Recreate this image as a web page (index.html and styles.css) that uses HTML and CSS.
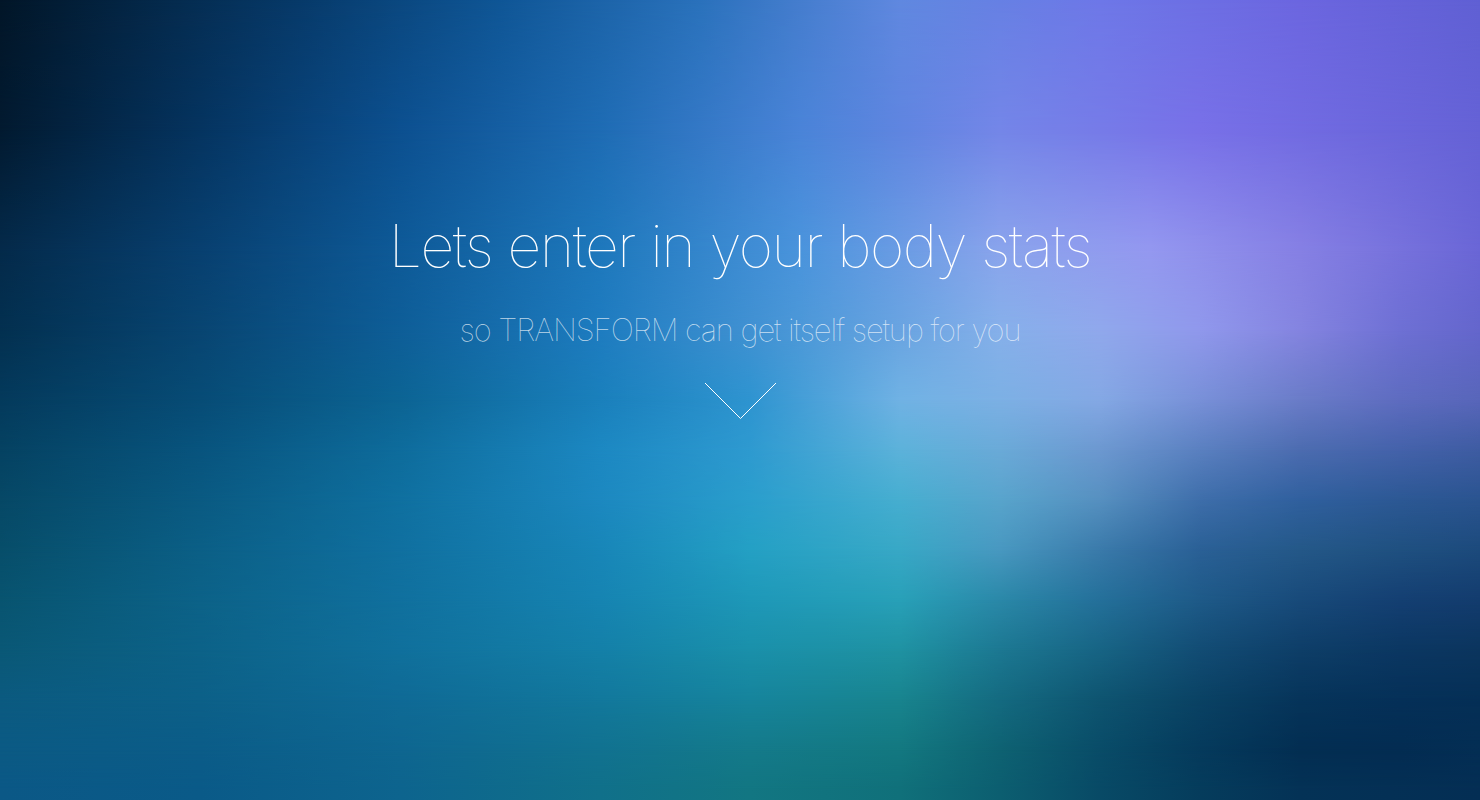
FILE: index.html
```html
<!DOCTYPE html>
<html lang="en">
<head>
<meta charset="utf-8">
<title>Body stats</title>
<link rel="stylesheet" href="styles.css">
</head>
<body>
<div class="page">
  <div class="bg bg-y0"></div>
  <div class="bg bg-y130"></div>
  <div class="bg bg-y250"></div>
  <div class="bg bg-y330"></div>
  <div class="bg bg-y400"></div>
  <div class="bg bg-y450"></div>
  <div class="bg bg-y500"></div>
  <div class="bg bg-y550"></div>
  <div class="bg bg-y600"></div>
  <div class="bg bg-y650"></div>
  <div class="bg bg-y700"></div>
  <div class="bg bg-y750"></div>
  <div class="bg bg-y790"></div>
  <main class="hero">
    <h1 class="hero-title">Lets enter in your body stats</h1>
    <p class="hero-sub">so TRANSFORM can get itself setup for you</p>
    <svg class="hero-chevron" width="73" height="38" viewBox="0 0 73 38" aria-hidden="true">
      <polyline points="1,1 36.5,36.5 72,1" fill="none" stroke="#ffffff" stroke-width="1"/>
    </svg>
  </main>
</div>
</body>
</html>
```
FILE: styles.css
```css
html, body {
  margin: 0;
  padding: 0;
  height: 100%;
}

body {
  font-family: "Inter", "Roboto", "Liberation Sans", sans-serif;
  color: #ffffff;
  overflow: hidden;
  background: #0a4a78;
}

.page {
  display: grid;
  grid-template: 800px / 1480px;
  width: 1480px;
  height: 800px;
}

.page > * {
  grid-area: 1 / 1;
}

/* blurred backdrop: horizontal colour rows, each faded in vertically over the previous one */
.bg-y0 {
  background: linear-gradient(90deg, #021628 0px, #073a6a 300px, #0f5696 500px, #2a72bc 700px, #6088e0 900px, #6e78e8 1100px, #6c66e0 1300px, #6060d4 1480px);
}
.bg-y130 {
  background: linear-gradient(90deg, #021a30 0px, #053460 200px, #0c5090 400px, #1e6cb4 600px, #4a84d8 800px, #7486e8 1000px, #7870e8 1200px, #6562d6 1480px);
  -webkit-mask-image: linear-gradient(180deg, transparent 0px, #000 130px);
  mask-image: linear-gradient(180deg, transparent 0px, #000 130px);
}
.bg-y250 {
  background: linear-gradient(90deg, #042a4a 0px, #084070 200px, #0e5a98 400px, #1e78bc 600px, #4a94dc 800px, #8aa4ec 1000px, #9498f0 1150px, #8680e4 1300px, #6a66d6 1480px);
  -webkit-mask-image: linear-gradient(180deg, transparent 130px, #000 250px);
  mask-image: linear-gradient(180deg, transparent 130px, #000 250px);
}
.bg-y330 {
  background: linear-gradient(90deg, #033050 0px, #084572 200px, #0e5e98 400px, #1e7cc0 600px, #4c98d8 800px, #86b0ea 1000px, #90a8ec 1100px, #9098ec 1200px, #8484e0 1300px, #6e70d4 1400px, #6466cc 1480px);
  -webkit-mask-image: linear-gradient(180deg, transparent 250px, #000 330px);
  mask-image: linear-gradient(180deg, transparent 250px, #000 330px);
}
.bg-y400 {
  background: linear-gradient(90deg, #043a5c 0px, #074c76 200px, #0c6494 400px, #1a80bc 600px, #2e94d0 750px, #70b2e4 900px, #7cb0e4 1000px, #84a8e4 1100px, #7890d8 1200px, #6a7cc8 1300px, #5e6cc0 1400px, #5866ba 1480px);
  -webkit-mask-image: linear-gradient(180deg, transparent 330px, #000 400px);
  mask-image: linear-gradient(180deg, transparent 330px, #000 400px);
}
.bg-y450 {
  background: linear-gradient(90deg, #054262 0px, #08547e 200px, #0e6c9c 400px, #1c88c2 600px, #2e9ad0 750px, #5cb2da 900px, #6aaad8 1000px, #6c98d0 1100px, #5a80c0 1200px, #4c6cb0 1300px, #4462aa 1400px, #3e5ca2 1480px);
  -webkit-mask-image: linear-gradient(180deg, transparent 400px, #000 450px);
  mask-image: linear-gradient(180deg, transparent 400px, #000 450px);
}
.bg-y500 {
  background: linear-gradient(90deg, #064866 0px, #0a5a82 200px, #0f70a0 400px, #1c88c0 600px, #2a9ecc 750px, #46aed0 900px, #58a4cc 1000px, #5690c0 1100px, #3e6eaa 1200px, #30609e 1300px, #2c5894 1400px, #2a5490 1480px);
  -webkit-mask-image: linear-gradient(180deg, transparent 450px, #000 500px);
  mask-image: linear-gradient(180deg, transparent 450px, #000 500px);
}
.bg-y550 {
  background: linear-gradient(90deg, #074e6a 0px, #0b5f86 200px, #1070a0 400px, #1886b8 600px, #24a0c4 750px, #38a8c6 900px, #4898c0 1000px, #3a7aaa 1100px, #2a6096 1200px, #245888 1300px, #1f5080 1400px, #1c4a7c 1480px);
  -webkit-mask-image: linear-gradient(180deg, transparent 500px, #000 550px);
  mask-image: linear-gradient(180deg, transparent 500px, #000 550px);
}
.bg-y600 {
  background: linear-gradient(90deg, #085470 0px, #0c6288 200px, #10709e 400px, #1684b2 600px, #1e98b8 750px, #28a0b8 900px, #2a88a8 1000px, #24709a 1100px, #1e5a88 1200px, #184a7a 1300px, #143f72 1400px, #133c6e 1480px);
  -webkit-mask-image: linear-gradient(180deg, transparent 550px, #000 600px);
  mask-image: linear-gradient(180deg, transparent 550px, #000 600px);
}
.bg-y650 {
  background: linear-gradient(90deg, #0a5876 0px, #0c6288 200px, #10709c 400px, #1480a8 600px, #1a90aa 750px, #1f92a2 900px, #1c7892 1000px, #176484 1100px, #124c74 1200px, #0e3e68 1300px, #0b3762 1400px, #0b355e 1480px);
  -webkit-mask-image: linear-gradient(180deg, transparent 600px, #000 650px);
  mask-image: linear-gradient(180deg, transparent 600px, #000 650px);
}
.bg-y700 {
  background: linear-gradient(90deg, #0b5a80 0px, #0c6088 200px, #0f6a96 400px, #12789c 600px, #16849c 750px, #18848e 900px, #146a80 1000px, #0e5470 1100px, #0a4264 1200px, #06345a 1300px, #053058 1400px, #052f56 1480px);
  -webkit-mask-image: linear-gradient(180deg, transparent 650px, #000 700px);
  mask-image: linear-gradient(180deg, transparent 650px, #000 700px);
}
.bg-y750 {
  background: linear-gradient(90deg, #0b5a84 0px, #0b5c88 200px, #0e6690 400px, #117290 600px, #147a8a 750px, #137880 900px, #0e6272 1000px, #094c68 1100px, #053a5c 1200px, #032e52 1300px, #032c52 1400px, #042e54 1480px);
  -webkit-mask-image: linear-gradient(180deg, transparent 700px, #000 750px);
  mask-image: linear-gradient(180deg, transparent 700px, #000 750px);
}
.bg-y790 {
  background: linear-gradient(90deg, #0b5886 0px, #0a5a88 200px, #0d648e 400px, #10708a 600px, #127682 750px, #10707a 900px, #0c5e70 1000px, #084a66 1100px, #053c5c 1200px, #043256 1300px, #042e54 1480px);
  -webkit-mask-image: linear-gradient(180deg, transparent 750px, #000 790px);
  mask-image: linear-gradient(180deg, transparent 750px, #000 790px);
}

.hero {
  z-index: 1;
  display: flex;
  flex-direction: column;
  align-items: center;
  padding-top: 206px;
}

.hero-title {
  margin: 0;
  font-size: 59px;
  font-weight: 100;
  line-height: 80px;
  letter-spacing: -1.5px;
}

.hero-sub {
  margin: 22px 0 0;
  font-size: 31px;
  font-weight: 100;
  line-height: 44px;
  letter-spacing: -1.1px;
  color: rgba(255,255,255,0.72);
}

.hero-chevron {
  display: block;
  margin-top: 30px;
}
```
